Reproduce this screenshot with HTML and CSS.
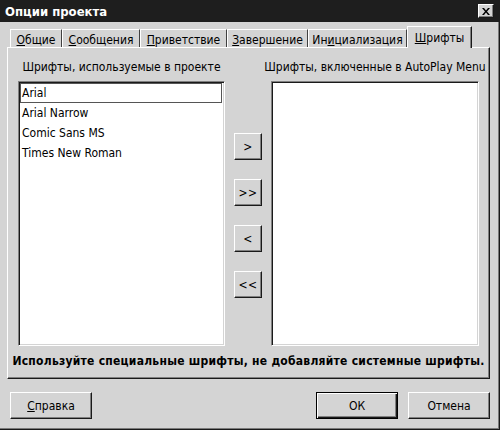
FILE: index.html
```html
<!DOCTYPE html>
<html lang="ru">
<head>
<meta charset="utf-8">
<title>Опции проекта</title>
<link rel="stylesheet" href="styles.css">
</head>
<body>
<div class="window">
  <div class="titlebar">
    <span class="title">Опции проекта</span>
    <span class="close">
      <svg width="8" height="7" viewBox="0 0 8 7"><path d="M0 0h2l2 2.5L6 0h2L5 3.5 8 7H6L4 4.5 2 7H0l3-3.5z" fill="#000"/></svg>
    </span>
  </div>
  <div class="content">
    <div class="tabs">
      <div class="tab t1"><u>О</u>бщие</div>
      <div class="tab t2"><u>С</u>ообщения</div>
      <div class="tab t3"><u>П</u>риветствие</div>
      <div class="tab t4"><u>З</u>авершение</div>
      <div class="tab t5">Ин<u>и</u>циализация</div>
      <div class="tab t6 active"><u>Ш</u>рифты</div>
    </div>
    <div class="panel">
      <div class="cols">
        <div class="col col-left">
          <div class="label"><span>Шрифты, используемые в проекте</span></div>
          <div class="listbox">
            <div class="item focus">Arial</div>
            <div class="item">Arial Narrow</div>
            <div class="item">Comic Sans MS</div>
            <div class="item">Times New Roman</div>
          </div>
        </div>
        <div class="mid">
          <button class="btn arrow">&gt;</button>
          <button class="btn arrow">&gt;&gt;</button>
          <button class="btn arrow">&lt;</button>
          <button class="btn arrow">&lt;&lt;</button>
        </div>
        <div class="col col-right">
          <div class="label"><span>Шрифты, включенные в AutoPlay Menu</span></div>
          <div class="listbox"></div>
        </div>
      </div>
      <div class="note">Используйте специальные шрифты, не добавляйте системные шрифты.</div>
    </div>
    <div class="footer">
      <button class="btn wide help"><u>С</u>правка</button>
      <span class="spacer"></span>
      <button class="btn wide default">ОК</button>
      <button class="btn wide">Отмена</button>
    </div>
  </div>
</div>
</body>
</html>
```
FILE: styles.css
```css
* { box-sizing: border-box; }
html, body { margin: 0; padding: 0; background: #d4d4d4; }
body {
  font-family: "DejaVu Sans", Verdana, sans-serif;
  font-stretch: condensed;
  font-size: 12px;
  color: #000;
}
u { text-decoration: underline; text-underline-offset: 1px; }

.window {
  width: 500px;
  height: 430px;
  background: #d4d4d4;
  box-shadow: inset -1px -1px 0 #1a1a1a, inset -2px -2px 0 #7a7a7a;
}

.titlebar {
  height: 22px;
  background: #1e1e1e;
  color: #fff;
  display: flex;
  align-items: center;
  padding: 0 6px 0 5px;
}
.title { font-weight: bold; font-size: 13px; }
.close {
  margin-left: auto;
  width: 16px;
  height: 14px;
  background: #d4d4d4;
  display: flex;
  align-items: center;
  justify-content: center;
  border: 1px solid;
  border-color: #fff #1a1a1a #1a1a1a #fff;
  box-shadow: inset -1px -1px 0 #808080;
}

.content { padding: 4px 10px 0 7px; }

.tabs {
  height: 21px;
  display: flex;
  align-items: flex-end;
  padding-left: 3px;
  position: relative;
  z-index: 1;
}
.tab {
  height: 18px;
  border-top: 1px solid #fff;
  border-left: 1px solid #fff;
  border-right: 1px solid #404040;
  text-align: center;
  line-height: 15px;
  padding-top: 3px;
  white-space: nowrap;
}
.t1 { width: 52px; }
.t2 { width: 78px; }
.t3 { width: 87px; }
.t4 { width: 81px; }
.t5 { width: 99px; }
.t6 { width: 65px; }
.tab.active {
  height: 22px;
  margin-bottom: -1px;
  background: #d4d4d4;
  padding-top: 3px;
  line-height: 17px;
  box-shadow: inset -1px 0 0 #808080;
  border-right-color: #1a1a1a;
}

.panel {
  height: 332px;
  border-top: 1px solid #fff;
  border-left: 1px solid #fff;
  border-right: 1px solid #1a1a1a;
  border-bottom: 1px solid #1a1a1a;
  box-shadow: inset -1px -1px 0 #808080;
  padding: 0 0 0 10px;
}

.cols { display: flex; }
.col-left { width: 207px; }
.col-right { width: 208px; }
.label {
  display: flex;
  justify-content: center;
  white-space: nowrap;
  height: 14px;
  line-height: 14px;
  margin-top: 12px;
  margin-bottom: 7px;
}
.listbox {
  height: 265px;
  background: #fff;
  border: 1px solid;
  border-color: #808080 #fff #fff #808080;
  box-shadow: inset 1px 1px 0 #1a1a1a, inset -1px -1px 0 #d4d4d4;
  padding: 1px 2px 0 1px;
}
.item {
  height: 20px;
  line-height: 21px;
  padding-left: 2px;
  white-space: nowrap;
}
.item.focus { border: 1px solid #555; padding-left: 1px; line-height: 18px; }

.mid {
  width: 46px;
  display: flex;
  flex-direction: column;
  align-items: center;
  padding-top: 85px;
  gap: 19px;
}

.btn {
  font-family: inherit;
  font-stretch: inherit;
  font-size: 12px;
  color: #000;
  background: #d4d4d4;
  border: 1px solid;
  border-color: #fff #1a1a1a #1a1a1a #fff;
  box-shadow: inset -1px -1px 0 #808080;
  padding: 0;
  margin: 0;
}
.arrow {
  width: 28px;
  height: 27px;
  letter-spacing: 0.5px;
}

.note {
  margin-top: 8px;
  font-weight: bold;
  text-align: center;
  white-space: nowrap;
  line-height: 14px;
  margin-left: -10px;
  letter-spacing: 0.25px;
}

.footer {
  display: flex;
  margin-top: 13px;
  padding-left: 3px;
}
.spacer { flex: 1; }
.wide { width: 82px; height: 27px; }
.default {
  border: 1px solid #000;
  box-shadow: inset 1px 1px 0 #fff, inset -1px -1px 0 #1a1a1a, inset -2px -2px 0 #808080;
  margin-right: 10px;
}
```
